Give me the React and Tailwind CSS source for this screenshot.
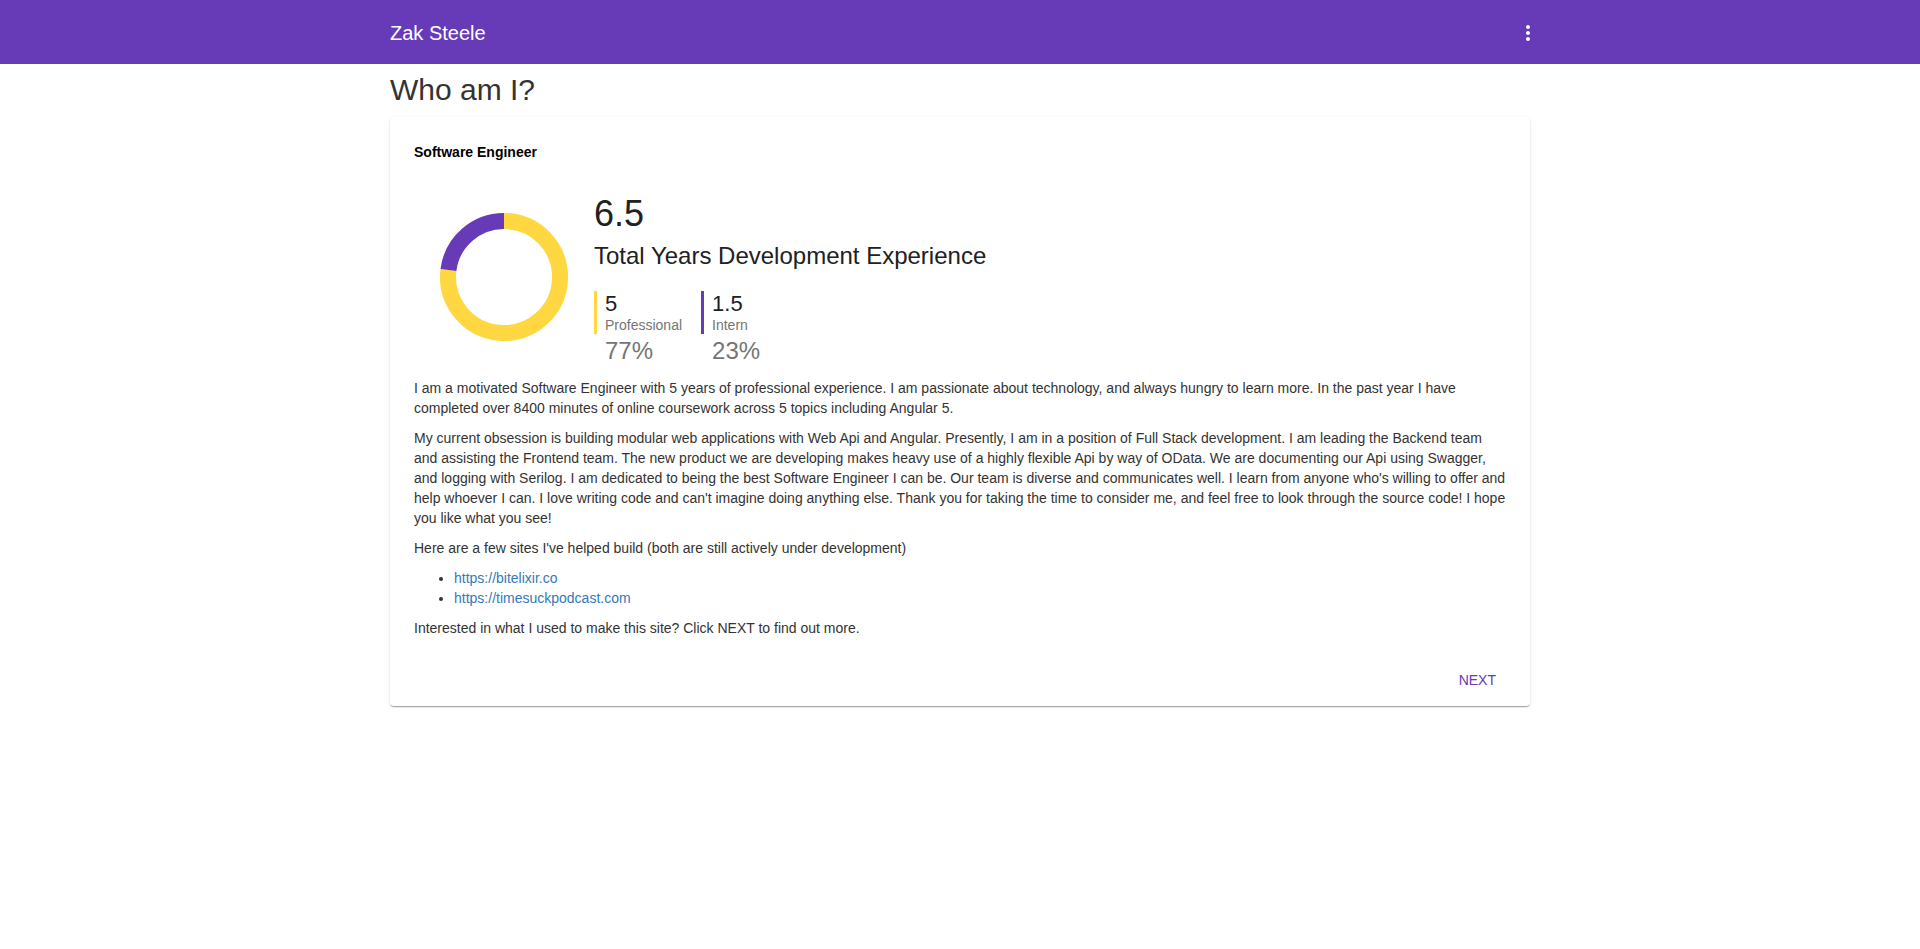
const STATS = [
  { value: '5', label: 'Professional', percent: '77%', bar: 'border-[#ffd740]' },
  { value: '1.5', label: 'Intern', percent: '23%', bar: 'border-[#673ab7]' },
];

const SITES = ['https://bitelixir.co', 'https://timesuckpodcast.com'];

function MoreVert() {
  return (
    <svg width="24" height="24" viewBox="0 0 24 24" fill="#fff">
      <path d="M12 8c1.1 0 2-.9 2-2s-.9-2-2-2-2 .9-2 2 .9 2 2 2zm0 2c-1.1 0-2 .9-2 2s.9 2 2 2 2-.9 2-2-.9-2-2-2zm0 6c-1.1 0-2 .9-2 2s.9 2 2 2 2-.9 2-2-.9-2-2-2z" />
    </svg>
  );
}

function Donut() {
  // 23% intern drawn counter-clockwise from 12 o'clock, the rest professional
  return (
    <svg width="180" height="180" viewBox="0 0 180 180">
      <path d="M 90 34 A 56 56 0 1 1 34.44 82.98" fill="none" stroke="#ffd740" strokeWidth="16" />
      <path d="M 90 34 A 56 56 0 0 0 34.44 82.98" fill="none" stroke="#673ab7" strokeWidth="16" />
    </svg>
  );
}

function Stat({ stat }) {
  return (
    <div className="mr-[19px] flex flex-col">
      <div className={`border-l-[3px] pl-2 ${stat.bar}`}>
        <div className="text-[22px] leading-[25px] text-[#212121]">{stat.value}</div>
        <div className="text-[14px] leading-[18px] text-[#757575]">{stat.label}</div>
      </div>
      <div className="mt-[3px] pl-[11px] text-[24px] leading-[28px] text-[#757575]">{stat.percent}</div>
    </div>
  );
}

export default function App() {
  return (
    <div className="min-h-screen bg-white font-['Liberation_Sans',Arial,sans-serif] text-[14px] leading-5 text-[#333]">
      <header className="h-16 bg-[#673ab7] text-white">
        <div className="mx-auto flex h-full w-[1140px] items-center justify-between">
          <span className="pt-[2px] text-[20px]">Zak Steele</span>
          <span className="-mr-[10px] mt-[2px] flex">
            <MoreVert />
          </span>
        </div>
      </header>

      <main className="mx-auto w-[1140px]">
        <h2 className="mb-[11px] mt-[9px] text-[30px] leading-[33px] text-[#333]">Who am I?</h2>

        <div className="rounded-[4px] bg-white px-6 pb-2 pt-[25px] shadow-[0_2px_1px_-1px_rgba(0,0,0,0.2),0_1px_1px_0_rgba(0,0,0,0.14),0_1px_3px_0_rgba(0,0,0,0.12)]">
          <div className="font-bold text-black">Software Engineer</div>

          <div className="mt-[25px] flex h-[180px] items-center">
            <div className="w-[180px] shrink-0">
              <Donut />
            </div>
            <div className="mt-[3px] flex flex-col">
              <div className="text-[36px] leading-[41px] text-[#212121]">6.5</div>
              <div className="mt-2 text-[24px] leading-[28px] text-[#212121]">Total Years Development Experience</div>
              <div className="mt-[21px] flex">
                {STATS.map((s) => (
                  <Stat key={s.label} stat={s} />
                ))}
              </div>
            </div>
          </div>

          <div className="mt-[11px]">
            <p className="mb-[10px]">
              I am a motivated Software Engineer with 5 years of professional experience. I am passionate about technology, and always hungry to learn more. In the past year I have completed over 8400 minutes of online coursework across 5 topics including Angular 5.
            </p>
            <p className="mb-[10px]">
              My current obsession is building modular web applications with Web Api and Angular. Presently, I am in a position of Full Stack development. I am leading the Backend team and assisting the Frontend team. The new product we are developing makes heavy use of a highly flexible Api by way of OData. We are documenting our Api using Swagger, and logging with Serilog. I am dedicated to being the best Software Engineer I can be. Our team is diverse and communicates well. I learn from anyone who's willing to offer and help whoever I can. I love writing code and can't imagine doing anything else. Thank you for taking the time to consider me, and feel free to look through the source code! I hope you like what you see!
            </p>
            <p className="mb-[10px]">Here are a few sites I've helped build (both are still actively under development)</p>
            <ul className="mb-[10px] list-disc pl-10">
              {SITES.map((url) => (
                <li key={url}>
                  <a href={url} className="text-[#337ab7]">{url}</a>
                </li>
              ))}
            </ul>
            <p>Interested in what I used to make this site? Click NEXT to find out more.</p>
          </div>

          <div className="-mr-[6px] mt-6 flex justify-end">
            <button className="h-9 rounded-[4px] px-4 text-[14px] uppercase text-[#673ab7]">Next</button>
          </div>
        </div>
      </main>
    </div>
  );
}
